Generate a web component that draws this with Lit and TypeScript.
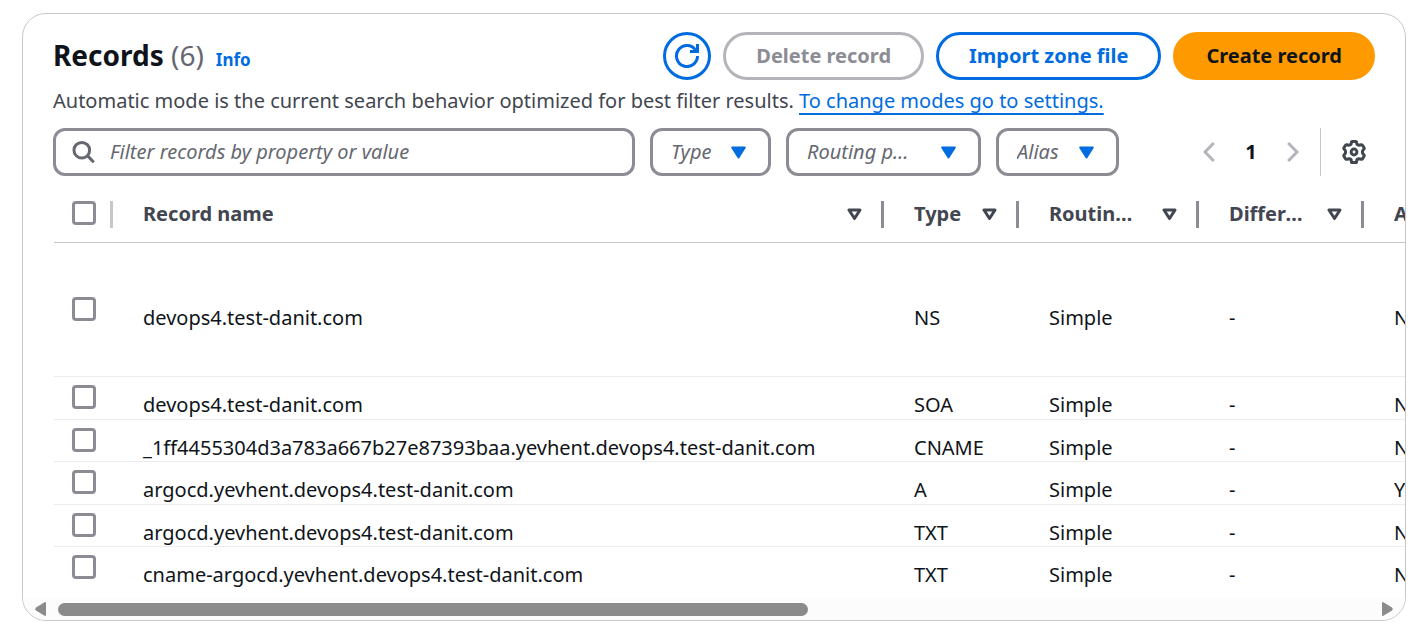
import { LitElement, html, css, svg } from "lit";
import { customElement, property } from "lit/decorators.js";
import { classMap } from "lit/directives/class-map.js";

interface DnsRecord {
  name: string;
  type: string;
  routing: string;
  differentiator: string;
  alias: string;
  tall?: boolean;
}

const RECORDS: DnsRecord[] = [
  { name: "devops4.test-danit.com", type: "NS", routing: "Simple", differentiator: "-", alias: "No", tall: true },
  { name: "devops4.test-danit.com", type: "SOA", routing: "Simple", differentiator: "-", alias: "No" },
  { name: "_1ff4455304d3a783a667b27e87393baa.yevhent.devops4.test-danit.com", type: "CNAME", routing: "Simple", differentiator: "-", alias: "No" },
  { name: "argocd.yevhent.devops4.test-danit.com", type: "A", routing: "Simple", differentiator: "-", alias: "Yes" },
  { name: "argocd.yevhent.devops4.test-danit.com", type: "TXT", routing: "Simple", differentiator: "-", alias: "No" },
  { name: "cname-argocd.yevhent.devops4.test-danit.com", type: "TXT", routing: "Simple", differentiator: "-", alias: "No" },
];

const COLUMNS = [
  { key: "name", label: "Record name" },
  { key: "type", label: "Type" },
  { key: "routing", label: "Routing policy" },
  { key: "differ", label: "Differentiator" },
  { key: "alias", label: "Alias" },
];

const refreshIcon = svg`<svg class="icon" width="24" height="24" viewBox="0 0 24 24" fill="none" stroke="currentColor" stroke-width="3" aria-hidden="true"><path d="M22.5 12A10.5 10.5 0 1 1 20.6 6"/><path d="M22.5 0V7.5H15"/></svg>`;
const searchIcon = svg`<svg class="icon" width="24" height="24" viewBox="0 0 24 24" fill="none" stroke="currentColor" stroke-width="3" aria-hidden="true"><circle cx="9.8" cy="10.2" r="7.8"/><path d="M15.4 15.6L21.8 22.2"/></svg>`;
const caretIcon = svg`<svg class="icon" width="15" height="13" viewBox="0 0 15 13" fill="currentColor" stroke="currentColor" stroke-width="2" stroke-linejoin="round" aria-hidden="true"><path d="M1.2 1.5H13.8L7.5 11.5Z"/></svg>`;
const sortIcon = svg`<svg class="icon" width="15" height="13" viewBox="0 0 15 13" fill="none" stroke="currentColor" stroke-width="3" stroke-linejoin="round" aria-hidden="true"><path d="M2 2H13L7.5 10.5Z"/></svg>`;
const prevIcon = svg`<svg class="icon" width="12" height="20" viewBox="0 0 12 20" fill="none" stroke="currentColor" stroke-width="3" aria-hidden="true"><path d="M10.8 1L2 10L10.8 19"/></svg>`;
const nextIcon = svg`<svg class="icon" width="12" height="20" viewBox="0 0 12 20" fill="none" stroke="currentColor" stroke-width="3" aria-hidden="true"><path d="M1.2 1L10 10L1.2 19"/></svg>`;
const gearIcon = svg`<svg class="icon" width="24" height="24" viewBox="0 0 24 24" fill="none" stroke="currentColor" stroke-width="3" stroke-linejoin="round" aria-hidden="true"><path d="M10.300 1.500H13.700Q14.600 1.500 14.600 2.600Q14.600 5.200 17 5.200L19.200 4.800Q20.200 4.600 20.700 5.500L22 7.700Q22.500 8.600 21.700 9.300Q19 12 21.700 14.700Q22.500 15.400 22 16.300L20.700 18.500Q20.200 19.400 19.200 19.200L17 18.800Q14.600 18.800 14.600 21.400Q14.600 22.500 13.700 22.500H10.300Q9.400 22.500 9.400 21.400Q9.400 18.800 7 18.800L4.800 19.200Q3.800 19.400 3.300 18.500L2 16.300Q1.500 15.400 2.300 14.700Q5 12 2.300 9.300Q1.500 8.600 2 7.700L3.300 5.500Q3.800 4.600 4.800 4.800L7 5.200Q9.400 5.200 9.400 2.600Q9.400 1.500 10.300 1.500Z"/><circle cx="12" cy="12" r="2.9"/></svg>`;

@customElement("filter-select")
class FilterSelect extends LitElement {
  @property() label = "";

  static styles = css`
    :host {
      display: grid;
      align-items: center;
      color: #006ce0;
    }
    .select {
      grid-area: 1 / 1;
      width: 100%;
      height: 48px;
      box-sizing: border-box;
      appearance: none;
      border: 3px solid #8c8c94;
      border-radius: 12px;
      background: #fff;
      color: #656871;
      font: italic 20px/30px "Noto Sans", sans-serif;
      padding: 0 48px 0 18px;
      text-overflow: ellipsis;
      white-space: nowrap;
      overflow: hidden;
    }
    :host(.wide) .select {
      padding-right: 60px;
    }
    .icon {
      grid-area: 1 / 1;
      justify-self: end;
      margin-right: 25px;
      pointer-events: none;
    }
  `;

  render() {
    return html`
      <select class="select" aria-label=${this.label}><option>${this.label}</option></select>
      ${caretIcon}
    `;
  }
}

@customElement("app-root")
class AppRoot extends LitElement {
  static styles = css`
    :host {
      display: block;
      padding: 13px 10px 11px 22px;
      background: #fff;
      color: #0f141a;
      font: 20px/30px "Noto Sans", sans-serif;
    }
    .icon {
      display: block;
      flex: none;
    }
    .card {
      border: 1px solid #c6c6cd;
      border-radius: 24px;
      overflow: hidden;
    }
    .top {
      padding: 18px 30px 0;
    }
    .heading {
      display: flex;
      align-items: center;
      gap: 12px;
    }
    .titles {
      flex: 1;
      display: flex;
      align-items: baseline;
      gap: 12px;
    }
    .title {
      margin: 0;
      font-size: 28px;
      line-height: 34px;
      font-weight: 700;
    }
    .count {
      font-weight: 400;
      color: #656871;
    }
    .info {
      font-size: 17px;
      font-weight: 700;
      color: #006ce0;
      text-decoration: none;
    }
    .button {
      height: 48px;
      box-sizing: border-box;
      padding: 0 30px;
      border: 3px solid #006ce0;
      border-radius: 24px;
      background: #fff;
      color: #006ce0;
      font: 700 20px/30px "Noto Sans", sans-serif;
      white-space: nowrap;
    }
    .button.round {
      width: 48px;
      padding: 0;
      display: grid;
      place-items: center;
    }
    .button:disabled {
      border-color: #b4b4bb;
      color: #8c8c94;
    }
    .button.primary {
      border-color: #ff9900;
      background: #ff9900;
      color: #0f141a;
    }
    .description {
      margin: 6px 0 12px;
      color: #424650;
    }
    .settings {
      color: #006ce0;
      text-decoration: underline 2px;
      text-underline-offset: 5px;
      text-decoration-skip-ink: none;
    }
    .toolbar {
      display: flex;
      align-items: center;
    }
    .filters {
      flex: 1;
      display: flex;
      gap: 15px;
    }
    .search {
      flex: 0 1 582px;
      box-sizing: border-box;
      height: 48px;
      display: flex;
      align-items: center;
      gap: 14px;
      padding: 0 16px;
      border: 3px solid #8c8c94;
      border-radius: 12px;
      color: #656871;
    }
    .query {
      flex: 1;
      min-width: 0;
      border: 0;
      padding: 0;
      outline: 0;
      background: none;
      font: 20px/30px "Noto Sans", sans-serif;
    }
    .query::placeholder {
      color: #656871;
      font-style: italic;
      opacity: 1;
    }
    .narrow {
      flex: 0 0 121px;
    }
    .medium {
      flex: 0 0 123px;
    }
    .wide {
      flex: 0 0 195px;
    }
    .pager {
      display: flex;
      align-items: center;
    }
    .tool {
      width: 42px;
      height: 42px;
      padding: 0;
      border: 0;
      background: none;
      display: grid;
      place-items: center;
      color: #424650;
      font: 700 20px/30px "Noto Sans", sans-serif;
    }
    .tool:disabled {
      color: #b4b4bb;
    }
    .tool.current {
      color: #0f141a;
    }
    .rule {
      width: 1px;
      height: 48px;
      margin: 0 12px 0 6px;
      background: #c6c6cd;
    }
    .scroller {
      margin-top: 10px;
      padding: 0 0 8px 31px;
      overflow-x: auto;
      scrollbar-width: none;
    }
    .table {
      width: 1445px;
      table-layout: fixed;
      border-collapse: separate;
      border-spacing: 0;
    }
    .col-check {
      width: 59px;
    }
    .col-name {
      width: 771px;
    }
    .col-type,
    .col-alias {
      width: 135px;
    }
    .col-routing {
      width: 180px;
    }
    .col-differ {
      width: 165px;
    }
    .head {
      height: 56px;
      padding: 0;
      border-bottom: 1px solid #c6c6cd;
      color: #424650;
      text-align: left;
    }
    .head-inner {
      display: flex;
      align-items: center;
      height: 27px;
      padding-left: 30px;
      border-right: 3px solid #8c8c94;
    }
    .head-inner.pick {
      padding-left: 18px;
      border-right-color: #c6c6cd;
    }
    .label {
      flex: 1;
      min-width: 0;
      overflow: hidden;
      text-overflow: ellipsis;
      white-space: nowrap;
    }
    .sort {
      margin: 0 19px;
      padding: 0;
      border: 0;
      background: none;
      color: #424650;
    }
    .cell {
      box-sizing: border-box;
      height: 42px;
      padding: 14px 0 0 30px;
      border-bottom: 1px solid #ebebf0;
      line-height: 26px;
      white-space: nowrap;
    }
    .row:nth-child(even) .cell,
    .row:last-child .cell {
      height: 43px;
    }
    .tall .cell {
      height: 134px;
      padding-top: 16px;
    }
    .row .cell.pick {
      padding: 0 0 0 18px;
    }
    .row:last-child .cell {
      border-bottom-color: transparent;
    }
    .check {
      appearance: none;
      display: block;
      box-sizing: border-box;
      width: 24px;
      height: 24px;
      margin: 0 0 2px;
      border: 3px solid #8c8c94;
      border-radius: 4px;
      background: #fff;
    }
    .scrollbar {
      display: flex;
      align-items: center;
      height: 22px;
      padding: 0 12px;
      background: #fcfcfc;
      color: #8b8b8b;
    }
    .track {
      flex: 1;
      padding: 0 12px;
    }
    .thumb {
      width: 57.2%;
      height: 13px;
      border-radius: 7px;
      background: #8b8b8b;
    }
  `;

  render() {
    return html`
      <section class="card">
        <div class="top">
          <header class="heading">
            <div class="titles">
              <h2 class="title">Records <span class="count">(6)</span></h2>
              <a class="info" href="#info">Info</a>
            </div>
            <button class="button round" aria-label="Refresh">${refreshIcon}</button>
            <button class="button" disabled>Delete record</button>
            <button class="button">Import zone file</button>
            <button class="button primary">Create record</button>
          </header>
          <p class="description">
            Automatic mode is the current search behavior optimized for best filter results.
            <a class="settings" href="#settings">To change modes go to settings.</a>
          </p>
          <div class="toolbar">
            <div class="filters">
              <label class="search">
                ${searchIcon}
                <input class="query" type="text" aria-label="Filter records" placeholder="Filter records by property or value" />
              </label>
              <filter-select class="narrow" label="Type"></filter-select>
              <filter-select class="wide" label="Routing policy"></filter-select>
              <filter-select class="medium" label="Alias"></filter-select>
            </div>
            <nav class="pager" aria-label="Pages">
              <button class="tool" disabled aria-label="Previous page">${prevIcon}</button>
              <button class="tool current">1</button>
              <button class="tool" disabled aria-label="Next page">${nextIcon}</button>
              <span class="rule"></span>
              <button class="tool" aria-label="Preferences">${gearIcon}</button>
            </nav>
          </div>
        </div>
        <div class="scroller">
          <table class="table">
            <colgroup>
              <col class="col-check" />
              ${COLUMNS.map((c) => html`<col class="col-${c.key}" />`)}
            </colgroup>
            <thead>
              <tr>
                <th class="head">
                  <div class="head-inner pick"><input class="check" type="checkbox" aria-label="Select all records" /></div>
                </th>
                ${COLUMNS.map(
                  (c) => html`<th class="head">
                    <div class="head-inner">
                      <span class="label">${c.label}</span>
                      <button class="sort" aria-label="Sort by ${c.label}">${sortIcon}</button>
                    </div>
                  </th>`
                )}
              </tr>
            </thead>
            <tbody>
              ${RECORDS.map(
                (r) => html`<tr class=${classMap({ row: true, tall: !!r.tall })}>
                  <td class="cell pick"><input class="check" type="checkbox" aria-label="Select ${r.name} ${r.type}" /></td>
                  <td class="cell">${r.name}</td>
                  <td class="cell">${r.type}</td>
                  <td class="cell">${r.routing}</td>
                  <td class="cell">${r.differentiator}</td>
                  <td class="cell">${r.alias}</td>
                </tr>`
              )}
            </tbody>
          </table>
        </div>
        <div class="scrollbar" aria-hidden="true">
          <svg class="icon" width="11" height="14" viewBox="0 0 11 14" fill="currentColor"><path d="M11 1V13Q11 14 10 14L1 8.5Q-.5 7 1 5.5L10 0Q11 0 11 1Z"/></svg>
          <div class="track"><div class="thumb"></div></div>
          <svg class="icon" width="11" height="14" viewBox="0 0 11 14" fill="currentColor"><path d="M0 1V13Q0 14 1 14L10 8.5Q11.5 7 10 5.5L1 0Q0 0 0 1Z"/></svg>
        </div>
      </section>
    `;
  }
}
